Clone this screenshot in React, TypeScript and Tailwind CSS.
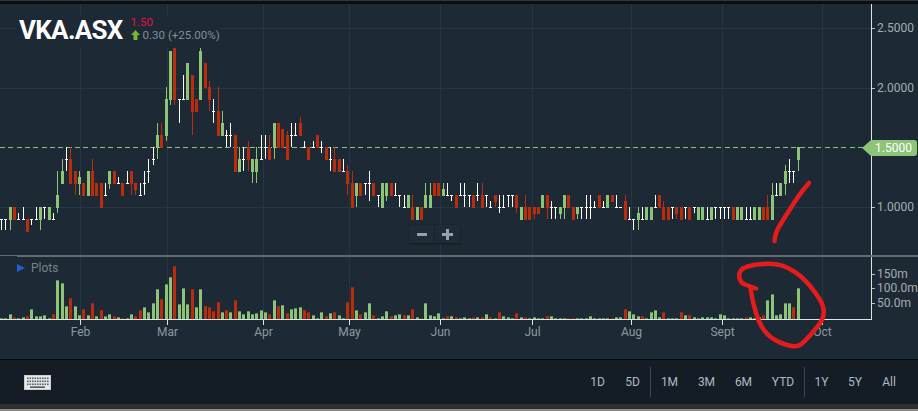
import React from "react";

type C = [string, number, number, number?, number?];
const candles: C[] = [
["w",9,9,9,8.1],["w",9,9,9,8.1],["g",10,9,10,8.1],["r",10,9],["w",9,9,9.5,9],["w",9,9,10,9],["r",9,8],["w",9,9,9,8.5],["w",9,9,10,9],["g",10,9,10,8.1],
["w",10,10,10,9],["g",10,9],["w",9,9,9.5,9],["g",11,10,13,9.5],["g",13,12,14,12],["w",14,14,15,13],["r",14,12,15,12],["r",13,12,13,11],["g",12.5,12,13,11],["r",12,11],
["g",13,11],["r",13,11,14,11],["r",12,11],["r",12,10],["w",11,11,12,11],["g",13,12,13,11.5],["r",13,12],["w",12,12,12.5,12],["r",12,11],["w",12,12,13,12],
["r",13,12,13,11],["r",12,11.5,12,11],["w",11,11,12,11],["w",12,12,13,11],["w",13,13,14,12],["w",14,14,15,13.5],["g",16,15,17,14],["r",16,15,17,15],["g",19,16,20,15.5],["g",23,19,23,18.5],
["r",23.3,19,23.3,18.5],["w",19,19,19,17],["w",19,19,21,19],["g",22,19],["r",21,18,21,16],["r",19,18],["g",23,19,23.3,19],["r",22,20],["r",20,19,20.5,18],["w",18,18,19,17],
["r",18,16,20,16],["g",17,16,18,16],["w",16,16,16.4,15],["w",16,16,17,15],["r",16,13],["g",14,13,15,13],["w",14,14,15,13],["r",15,14,15.5,13],["g",14,13,14,12],["g",14,13,15,12],
["w",14,14,16,14],["w",15,15,16,14],["r",15,14,16,14],["g",17,15,17,14],["r",17,15],["r",16.5,15],["r",16,14,16.3,14],["w",16,16,17,15],["w",16,16,17,16],["r",17,16,17.5,16],
["w",15,15,15.5,15],["r",15,14],["w",15,15,15.5,15],["r",16,15],["w",15,15,15.5,14.5],["r",15,14],["w",14,14,15,13],["r",14,13,15,13],["r",14,13],["w",13,13,14,13],
["r",13,12,13.5,11],["r",12,10,13,10],["g",12,11,12,10],["r",12,11],["w",12,12,12,11],["w",12,12,13,10.5],["r",12,11],["w",11,11,11,10],["g",12,10],["g",12,11,12,10.5],
["r",12,11],["w",11,11,12,11],["w",11,11,11,10],["w",10,10,11,10],["g",11,10],["r",10,9,11,9],["g",10,9],["r",10,9],["g",11,10,12,10],["g",11,10,12,10],
["r",12,11],["r",12,11],["g",11.5,11,12,11],["w",11,11,12,11],["w",11,11,11,10.5],["r",11,10],["w",11,11,12,11],["w",11,11,12,10],["w",11,11,11,10],["r",11,10],
["w",11,11,12,10.5],["r",11,10,12,10],["w",11,11,11,10],["w",10,10,10.5,10],["r",11,10.5,11,10],["w",10,10,11,9.5],["w",10,10,11,10],["w",11,11,11,10],["w",11,11,11,10],["r",11,10,11,9.5],
["g",10,9],["r",10,9,11,9],["r",10,9],["r",10,9.5,10,9],["r",10,9.5],["g",11,10],["r",11,10,11,9],["w",10,10,10.5,9],["w",10,10,10,9],["g",10,9.5,10,9],
["g",11,10,11,9],["r",11,10],["r",10,9],["g",10,9.5,10,9],["w",10,10,10,9],["w",10,10,11,9],["w",10,10,11,9],["w",10,10,10.5,10],["r",11,10],["w",10,10,10.5,10],
["g",11,10],["r",11,10.5],["w",10,10,11,10],["w",10,10,10,10],["r",10.5,9,11,9],["w",9,9,10,9],["w",9,9,9,8.1],["g",9.5,9,10,8.1],["w",9,9,10,9],["g",10,9],
["g",10,9],["w",10,10,11,10],["r",11,10],["r",10,9,10.5,9],["r",10,9],["w",10,10,10,9],["r",10,9.5,10,9],["r",10,9],["w",10,10,10,9],["r",10,9],
["w",10,10,10,9.5],["g",10,9],["g",10,9],["w",9,9,10,9],["g",10,9],["w",10,10,10,9],["w",10,10,10,9],["w",10,10,10,9],["w",10,10,10,9],["r",10,9],
["g",10,9],["g",10,9],["w",9,9,10,9],["w",9,9,10,9],["g",10,9],["g",10,9],["r",10,9],["r",10,9,11,9],["g",11,9,12,9],["w",11,11,12,11],
["g",12,11],["g",13,12,13.5,11],["w",13,13,14,12],["w",13,13,13,12],["g",15,14,15,13],
];

const volume: [string, number][] = ([
"g189","g189","g178","r187","g189","g186","r184","g163","g184","g184","g181","g190","r178","g76","g85","g154","r130","g154","g181","r163",
"g181","r145","g184","r166","g184","g178","r184","g187","r190","g190","g178","r184","r166","g157","g172","g145","g103","r133","g88","g67",
"r34","g148","g100","g148","r103","g157","g103","r154","r157","r169","r142","g172","r166","g172","r136","g169","g176","g169","g178","g175",
"g166","g172","r178","g136","r154","g151","r175","g163","g160","g157","r166","r172","g181","g190","g172","r184","g175","r172","g181","g189",
"r142","r97","g166","r178","g172","g145","r181","g189","g184","g169","r184","g181","g178","r181","g181","r163","g187","r190","g145","g181",
"g184","g175","g189","r184","g184","r187","g189","g187","g189","r187","g187","r187","g178","r187","g189","r172","g184","g187","g190","r175",
"g187","r187","g189","g187","g190","g189","r184","g184","g189","g189","g189","r190","r190","g190","g189","g189","g184","g190","g189","g189",
"g189","r190","g187","g187","r163","g169","g178","g184","r184","g189","g172","g166","g187","r172","g189","g189","g189","r172","g181","r181",
"g187","g189","g187","g187","g187","g189","g178","g181","g189","g189","g189","g189","r187","g187","g189","g187","r181","g136","g118","g181",
"g178","g145","g145","r157","g100",
] as string[]).map((s) => [s[0], Number(s.slice(1))]);

const colors: Record<string, string> = { g: "#8cc578", r: "#b92c0c", w: "#ffffff" };
const tops: Record<string, string> = { g: "#5f8f5f", r: "#8f2a10" };
const xOf = (i: number) => Math.round(4.33 * i);
const yOf = (p: number) => Math.round(147 + (15 - p) * 12);

const months: [string, number][] = [["Feb",80],["Mar",167],["Apr",263],["May",349],["Jun",440],["Jul",532],["Aug",631],["Sept",722],["Oct",822]];
const font = { fontFamily: "Roboto, sans-serif" };

function smooth(pts: number[][]) {
  let d = `M${pts[0][0]} ${pts[0][1]}`;
  for (let i = 1; i < pts.length - 1; i++) {
    const mx = (pts[i][0] + pts[i + 1][0]) / 2;
    const my = (pts[i][1] + pts[i + 1][1]) / 2;
    d += ` Q${pts[i][0]} ${pts[i][1]} ${mx} ${my}`;
  }
  const l = pts[pts.length - 1];
  return d + ` L${l[0]} ${l[1]}`;
}

const loop = smooth([[756,288.5],[749,286],[741,283],[738.5,275],[742,268],[755,264.5],[770,263.5],[782,265],[795,271.5],[806,281],[815,292],[823.5,305],[824,318],[814,331],[805,341],[798,347],[785,345],[769,337],[759,323],[753,303],[750.5,288]]);
const slash = smooth([[774.5,241],[775,233],[785,217],[799,195],[809,183]]);

function PriceLabel({ y, t }: { y: number; t: string }) {
  return (
    <g>
      <line x1="872" x2="875" y1={y + 0.5} y2={y + 0.5} stroke="#b8bec3" />
      <text x="877" y={y + 4} fontSize="12" fill="#a5acb2" style={font}>{t}</text>
    </g>
  );
}

export default function App() {
  return (
    <div className="relative w-[918px] h-[411px] flex flex-col overflow-hidden bg-[#1d2935] font-['Roboto',sans-serif]">
      <div className="h-[4px] bg-[#0a0f14] border-t border-[#2a3640] shrink-0" />

      <section className="relative h-[251px] shrink-0">
        <svg width="918" height="251" viewBox="0 4 918 251" className="block" shapeRendering="crispEdges">
          {months.map(([m, x]) => (
            <line key={m} x1={x + 0.5} x2={x + 0.5} y1="4" y2="255" stroke="#263645" />
          ))}
          {[28, 88, 207].map((y) => (
            <line key={y} x1="0" x2="871" y1={y + 0.5} y2={y + 0.5} stroke="#263645" />
          ))}
          <line x1="0" x2="864" y1="147.5" y2="147.5" stroke="#8cc578" strokeDasharray="5 3.33" />
          {candles.map(([t, top, bot, hi, lo], i) => {
            const x = xOf(i);
            const c = colors[t];
            const yHi = yOf(hi ?? top);
            const yLo = yOf(lo ?? bot);
            return (
              <g key={i}>
                {yLo > yHi && <rect x={x + 1} y={yHi} width="1" height={yLo - yHi} fill={c} />}
                {t === "w" ? (
                  <rect x={x} y={yOf(top)} width="3" height="1" fill={c} />
                ) : (
                  <rect x={x} y={yOf(top)} width="3" height={yOf(bot) - yOf(top) + 1} fill={c} />
                )}
              </g>
            );
          })}
          <line x1="871.5" x2="871.5" y1="4" y2="255" stroke="#dfe3e6" />
          <PriceLabel y={28} t="2.5000" />
          <PriceLabel y={88} t="2.0000" />
          <PriceLabel y={207} t="1.0000" />
        </svg>

        <div className="absolute left-[16px] top-[11px] w-[204px] h-[33px] flex items-start gap-[8px] pl-[3px] bg-[#1d2935] whitespace-nowrap">
          <span className="shrink-0 text-[26px] leading-[26px] pt-[2px] font-bold text-white tracking-[-0.7px]">VKA.ASX</span>
          <div className="shrink-0 flex flex-col pt-[0.5px]">
            <span className="text-[11.5px] leading-[13px] text-[#e0143c]">1.50</span>
            <span className="flex items-center gap-[3px] text-[11.5px] leading-[13px] text-[#858d95]">
              <svg width="9" height="10" viewBox="0 0 9 10"><path d="M4.5 0 L9 5 H6.5 V10 H2.5 V5 H0 Z" fill="#79b72c" /></svg>
              0.30 (+25.00%)
            </span>
          </div>
        </div>

        <div className="absolute right-[1px] top-[136px] h-[16px] w-[55px]">
          <svg width="55" height="16" viewBox="0 0 55 16" className="absolute inset-0">
            <path d="M0 8 L9 0 H52 Q55 0 55 3 V13 Q55 16 52 16 H9 Z" fill="#8cc578" />
          </svg>
          <span className="absolute right-[5px] top-0 text-[12px] leading-[16px] text-white">1.5000</span>
        </div>

        <div className="absolute left-[409px] top-[221px] w-[51px] h-[19px] flex bg-[#1f2c38] rounded-[2px] border-b border-[#141d26] shadow-[0_0_2px_#16202a]">
          <button className="flex-1 flex items-center justify-center border-r border-[#18222c]">
            <span className="block w-[10px] h-[3px] bg-[#98a1aa]" />
          </button>
          <button className="flex-1 flex items-center justify-center">
            <svg width="11" height="11" viewBox="0 0 11 11"><path d="M4 0h3v4h4v3H7v4H4V7H0V4h4z" fill="#98a1aa" /></svg>
          </button>
        </div>
      </section>

      <div className="h-[2px] shrink-0 bg-[#666a6d] flex">
        <div className="w-[17px] h-[1px] mt-[1px] bg-[#1d2935]" />
      </div>

      <section className="relative h-[102px] shrink-0">
        <svg width="918" height="102" viewBox="0 257 918 102" className="block" shapeRendering="crispEdges">
          {months.map(([m, x]) => (
            <line key={m} x1={x + 0.5} x2={x + 0.5} y1="257" y2="319" stroke="#263645" />
          ))}
          {volume.map(([t, z], i) => {
            const x = xOf(i);
            const top = 255 + Math.round(z / 3);
            const h = 319 - top;
            if (h <= 0) return null;
            return (
              <g key={i}>
                <rect x={x} y={top} width="3" height={h} fill={colors[t]} />
                <rect x={x} y={top} width="3" height="1" fill={tops[t]} />
              </g>
            );
          })}
          <line x1="0" x2="872" y1="319.5" y2="319.5" stroke="#dfe3e6" />
          <line x1="871.5" x2="871.5" y1="257" y2="320" stroke="#dfe3e6" />
          {months.map(([m, x]) => (
            <g key={m}>
              <line x1={x + 0.5} x2={x + 0.5} y1="320" y2="325" stroke="#dfe3e6" />
              <text x={x + 0.5} y="336" fontSize="12" textAnchor="middle" fill="#8f98a0" style={font}>{m}</text>
            </g>
          ))}
          <PriceLabel y={274} t="150m" />
          <PriceLabel y={288} t="100.0m" />
          <PriceLabel y={303} t="50.0m" />
        </svg>
        <div className="absolute left-[17px] top-[4px] flex items-center gap-[6px] text-[12px] leading-[14px] text-[#77828c]">
          <span className="w-0 h-0 border-y-[4px] border-y-transparent border-l-[8px] border-l-[#1f5fcf]" />
          Plots
        </div>
      </section>

      <footer className="h-[45px] shrink-0 border-t border-[#06090c] bg-[#141d26] flex items-center justify-between pl-[24px] pr-[12px]">
        <svg width="27" height="15" viewBox="0 0 27 15">
          <rect width="27" height="15" fill="#c9cdd1" />
          <rect x="1" y="1" width="25" height="13" fill="#e6e8ea" />
          {[3, 6, 9].map((y) =>
            [3, 5.5, 8, 10.5, 13, 15.5, 18, 20.5, 23].map((x) => (
              <rect key={`${x}-${y}`} x={x} y={y - 0.5} width="1.6" height="1.6" fill="#5a6066" />
            ))
          )}
          <rect x="6" y="11.5" width="15" height="1.3" fill="#33383d" />
        </svg>
        <nav className="flex items-center text-[12px] text-[#aeb9c3]">
          <button className="w-[35px] text-center">1D</button>
          <button className="w-[35px] text-center">5D</button>
          <span className="w-px h-[30px] bg-[#2c4a66]" />
          <button className="w-[37px] text-center">1M</button>
          <button className="w-[37px] text-center">3M</button>
          <button className="w-[37px] text-center">6M</button>
          <button className="w-[42px] text-center">YTD</button>
          <span className="w-px h-[30px] bg-[#2c4a66]" />
          <button className="w-[33px] text-center">1Y</button>
          <button className="w-[34px] text-center">5Y</button>
          <button className="w-[34px] text-center">All</button>
        </nav>
      </footer>

      <div className="flex-1 flex flex-col bg-[#2f2f2f] justify-end">
        <div className="h-[2px] bg-[#8a8a8a]" />
      </div>

      <svg width="918" height="411" viewBox="0 0 918 411" className="absolute inset-0 pointer-events-none">
        <path d={loop} fill="none" stroke="#e51c1c" strokeWidth="4.5" strokeLinecap="round" strokeLinejoin="round" />
        <path d={slash} fill="none" stroke="#e51c1c" strokeWidth="4.5" strokeLinecap="round" strokeLinejoin="round" />
      </svg>
    </div>
  );
}
